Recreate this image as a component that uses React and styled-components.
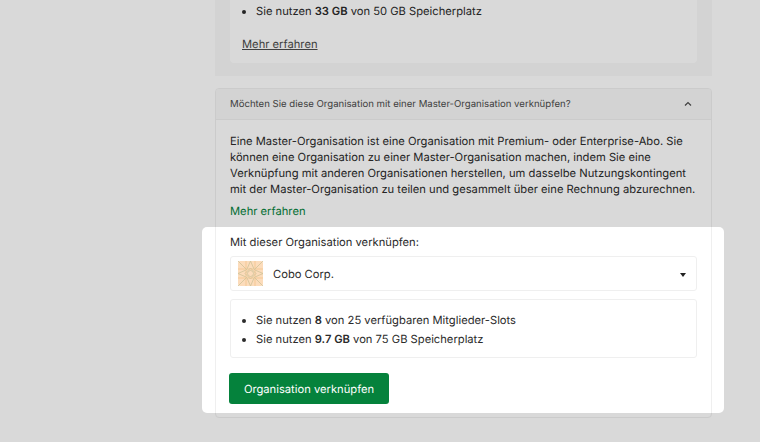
import React from "react";
import styled, { createGlobalStyle } from "styled-components";

const Global = createGlobalStyle`
  html, body { margin: 0; padding: 0; background: #fff; }
  body {
    font-family: Inter, "Liberation Sans", sans-serif;
    color: #2b2b2b;
    font-size: 11.2px;
    text-rendering: geometricPrecision;
  }
`;

const Page = styled.div`
  position: relative;
  width: 760px;
  height: 442px;
  overflow: hidden;
  background: #fff;
  display: flex;
  flex-direction: column;
  align-items: center;
  gap: 12px;
  padding-left: 167px;
  box-sizing: border-box;
`;

const UsagePanel = styled.section`
  width: 497px;
  box-sizing: border-box;
  background: #f8f8f8;
  padding: 0 15px 13px;
  height: 76px;
  flex: none;
`;

const UsageCard = styled.div`
  background: #fff;
  border-radius: 0 0 4px 4px;
  height: 63px;
  padding: 2px 12px 0;
  box-sizing: border-box;
`;

const Accordion = styled.section`
  width: 497px;
  box-sizing: border-box;
  flex: none;
  border: 1px solid #efefef;
  border-radius: 4px;
  background: #fff;
`;

const AccordionHeader = styled.header`
  height: 31px;
  box-sizing: border-box;
  background: #f8f8f8;
  border-bottom: 1px solid #efefef;
  border-radius: 3px 3px 0 0;
  padding: 0 18px 0 14px;
  display: flex;
  align-items: center;
  justify-content: space-between;
  font-size: 9.6px;
  color: #4c4c4c;
`;

const AccordionBody = styled.div`
  padding: 13px 14px 13px;
  display: flex;
  flex-direction: column;
`;

const Paragraph = styled.p`
  margin: 0;
  font-size: 11.2px;
  line-height: 16px;
  color: #2b2b2b;
`;

const GreenLink = styled.a`
  margin-top: 6px;
  font-size: 11.2px;
  line-height: 16px;
  color: #05823c;
`;

const Label = styled.div`
  margin-top: 15px;
  font-size: 11.2px;
  line-height: 16px;
  color: #2b2b2b;
`;

const Select = styled.div`
  margin-top: 6px;
  height: 35px;
  box-sizing: border-box;
  border: 1px solid #efefef;
  border-radius: 3px;
  padding: 0 10px 0 7px;
  display: flex;
  align-items: center;
  gap: 10px;
`;

const SelectName = styled.span`
  flex: 1;
  font-size: 11.2px;
  color: #2b2b2b;
`;

const Caret = styled.span`
  width: 0;
  height: 0;
  border-left: 3px solid transparent;
  border-right: 3px solid transparent;
  border-top: 4px solid #222;
  margin-top: 3px;
`;

const InfoBox = styled.div`
  margin-top: 8px;
  height: 59px;
  box-sizing: border-box;
  border: 1px solid #efefef;
  border-radius: 3px;
  padding: 11px 12px 0 11px;
`;

const UsageList = styled.ul`
  margin: 0;
  padding: 0 0 0 14px;
  list-style: disc;
  font-size: 11.2px;
  line-height: 19px;
  color: #2b2b2b;
  strong { font-weight: 600; }
`;

const PlainLink = styled.a`
  display: block;
  margin-top: 15px;
  font-size: 11.2px;
  line-height: 16px;
  color: #4c4c4c;
  text-decoration: underline;
`;

const Button = styled.button`
  margin-top: 15px;
  align-self: flex-start;
  width: 160px;
  height: 31px;
  margin-left: -1px;
  border: 0;
  border-radius: 3px;
  background: #05823c;
  color: #fff;
  font-family: inherit;
  font-size: 11.2px;
  text-rendering: geometricPrecision;
`;

const Spotlight = styled.div`
  position: absolute;
  left: 202px;
  top: 227px;
  width: 522px;
  height: 186px;
  border-radius: 5px;
  box-shadow: 0 0 0 900px rgba(0, 0, 0, 0.15);
  pointer-events: none;
`;

const Chevron = () => (
  <svg width="10" height="10" viewBox="0 0 10 10" fill="none">
    <path d="M2 6.5 L5 3.5 L8 6.5" stroke="#4c4c4c" strokeWidth="1.2" />
  </svg>
);

const Avatar = () => (
  <svg width="25" height="25" viewBox="0 0 25 25" style={{ flex: "none" }}>
    <rect width="25" height="25" rx="2" fill="#fcdcbb" />
    <path d="M0 7H25V9H0ZM0 16H25V18H0ZM7 0H9V25H7ZM16 0H18V25H16Z" fill="#f8d2a8" />
    <g stroke="#cfc398" strokeWidth="0.8" fill="none">
      <path d="M0 0L9 9M25 0L16 9M0 25L9 16M25 25L16 16" />
      <path d="M12.5 0L9 8M12.5 0L16 8M12.5 25L9 17M12.5 25L16 17M0 12.5L8 9M0 12.5L8 16M25 12.5L17 9M25 12.5L17 16" />
      <path d="M12.5 7L18 12.5L12.5 18L7 12.5Z" />
      <circle cx="12.5" cy="12.5" r="3" />
    </g>
  </svg>
);

export default function App() {
  return (
    <Page>
      <Global />
      <UsagePanel>
        <UsageCard>
          <UsageList>
            <li>Sie nutzen <strong>33 GB</strong> von 50 GB Speicherplatz</li>
          </UsageList>
          <PlainLink>Mehr erfahren</PlainLink>
        </UsageCard>
      </UsagePanel>
      <Accordion>
        <AccordionHeader>
          <span>Möchten Sie diese Organisation mit einer Master-Organisation verknüpfen?</span>
          <Chevron />
        </AccordionHeader>
        <AccordionBody>
          <Paragraph>
            Eine Master-Organisation ist eine Organisation mit Premium- oder Enterprise-Abo. Sie
            können eine Organisation zu einer Master-Organisation machen, indem Sie eine
            Verknüpfung mit anderen Organisationen herstellen, um dasselbe Nutzungskontingent
            mit der Master-Organisation zu teilen und gesammelt über eine Rechnung abzurechnen.
          </Paragraph>
          <GreenLink>Mehr erfahren</GreenLink>
          <Label>Mit dieser Organisation verknüpfen:</Label>
          <Select>
            <Avatar />
            <SelectName>Cobo Corp.</SelectName>
            <Caret />
          </Select>
          <InfoBox>
            <UsageList>
              <li>Sie nutzen <strong>8</strong> von 25 verfügbaren Mitglieder-Slots</li>
              <li>Sie nutzen <strong>9.7 GB</strong> von 75 GB Speicherplatz</li>
            </UsageList>
          </InfoBox>
          <Button>Organisation verknüpfen</Button>
        </AccordionBody>
      </Accordion>
      <Spotlight />
    </Page>
  );
}
